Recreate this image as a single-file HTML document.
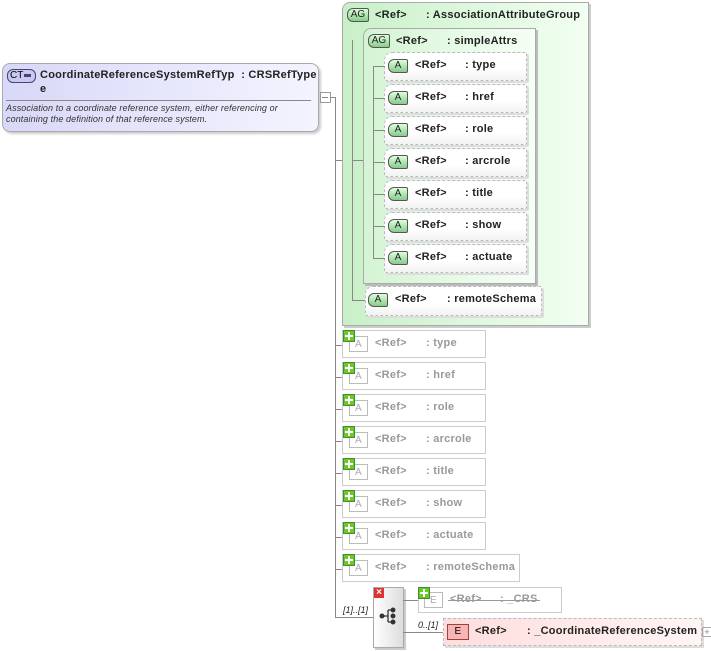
<!DOCTYPE html>
<html><head><meta charset="utf-8"><style>
body{margin:0;width:711px;height:651px;background:#fff;position:relative;overflow:hidden;font-family:"Liberation Sans",sans-serif;font-size:11px;letter-spacing:0.25px}
.a{position:absolute}
.b{font-weight:bold;color:#222;margin-top:1px}
.g{color:#999;font-weight:bold;margin-top:1px}
.ln{position:absolute;background:#888}
.badge{position:absolute;height:12px;border:1px solid #555;border-radius:6px 2px 2px 6px;background:linear-gradient(#dfd,#8c8);font-size:10px;text-align:center;line-height:12px;color:#222;letter-spacing:0}
.att{position:absolute;border:1px dashed #bbb;border-radius:8px 2px 2px 2px;background:linear-gradient(#fff,#fff 60%,#f2f2f2);box-shadow:2px 2px 0 #ddd}
.gi{position:absolute;border:1px solid #ccc;background:#fff;width:142px;height:26px}
.ga{position:absolute;width:17px;height:14px;border:1px solid #bbb;color:#aaa;font-size:10px;text-align:center;line-height:15px;background:#fff}
.plus{position:absolute;width:10px;height:10px;background:#6c2;border:1px solid #483}
.plus:before{content:"";position:absolute;left:4px;top:1px;width:2px;height:8px;background:#fff}
.plus:after{content:"";position:absolute;left:1px;top:4px;width:8px;height:2px;background:#fff}
</style></head><body>
<div class="a" style="left:2px;top:63px;width:315px;height:67px;border:1px solid #aaa;border-radius:8px;background:linear-gradient(90deg,#d8d8f8,#f4f4ff);box-shadow:2px 2px 2px #ccc"></div>
<div class="a" style="left:7px;top:69px;width:25px;height:12px;border:1px solid #447;border-radius:6px;background:#c8c8f0;font-size:10px;line-height:12px;padding-left:2px;letter-spacing:0">CT<span style="display:inline-block;width:7px;height:3px;background:#447;vertical-align:middle;margin-left:1px"></span></div>
<div class="a b" style="left:40px;top:68px;">CoordinateReferenceSystemRefTyp&nbsp; : CRSRefType</div>
<div class="a b" style="left:40px;top:82px;">e</div>
<div class="a" style="left:6px;top:100px;width:305px;height:1px;background:#888"></div>
<div class="a" style="left:6px;top:103px;font-size:9px;font-style:italic;color:#333;line-height:11px;letter-spacing:0.1px">Association to a coordinate reference system, either referencing or<br>containing the definition of that reference system.</div>
<div class="a" style="left:320px;top:92px;width:9px;height:9px;border:1px solid #999;background:#fff"></div>
<div class="ln" style="left:322px;top:97px;width:6px;height:1px"></div>
<div class="ln" style="left:330px;top:97px;width:6px;height:1px"></div>
<div class="ln" style="left:335px;top:97px;width:1px;height:521px"></div>
<div class="ln" style="left:335px;top:160px;width:8px;height:1px"></div>
<div class="a" style="left:342px;top:2px;width:245px;height:322px;border:1px solid #aaa;background:linear-gradient(90deg,#c8f0c8,#f2fff2);box-shadow:2px 2px 0 #ccc;border-radius:8px 0 0 0"></div>
<div class="badge" style="left:347px;top:8px;width:20px">AG</div>
<div class="a b" style="left:375px;top:8px">&lt;Ref&gt;</div>
<div class="a b" style="left:426px;top:8px">: AssociationAttributeGroup</div>
<div class="ln" style="left:352px;top:40px;width:1px;height:260px"></div>
<div class="ln" style="left:352px;top:160px;width:11px;height:1px"></div>
<div class="ln" style="left:352px;top:300px;width:13px;height:1px"></div>
<div class="a" style="left:363px;top:28px;width:171px;height:254px;border:1px solid #aaa;background:linear-gradient(90deg,#d4f4d4,#f6fff6);box-shadow:2px 2px 0 #bbb;border-radius:8px 0 0 0"></div>
<div class="badge" style="left:368px;top:34px;width:20px">AG</div>
<div class="a b" style="left:396px;top:34px">&lt;Ref&gt;</div>
<div class="a b" style="left:447px;top:34px">: simpleAttrs</div>
<div class="ln" style="left:373px;top:66px;width:1px;height:193px"></div>
<div class="att" style="left:384px;top:52px;width:141px;height:27px"></div><div class="badge" style="left:388px;top:59px;width:18px">A</div><div class="a b" style="left:415px;top:58px">&lt;Ref&gt;</div><div class="a b" style="left:465px;top:58px">: type</div><div class="ln" style="left:373px;top:66px;width:12px;height:1px"></div>
<div class="att" style="left:384px;top:84px;width:141px;height:27px"></div><div class="badge" style="left:388px;top:91px;width:18px">A</div><div class="a b" style="left:415px;top:90px">&lt;Ref&gt;</div><div class="a b" style="left:465px;top:90px">: href</div><div class="ln" style="left:373px;top:98px;width:12px;height:1px"></div>
<div class="att" style="left:384px;top:116px;width:141px;height:27px"></div><div class="badge" style="left:388px;top:123px;width:18px">A</div><div class="a b" style="left:415px;top:122px">&lt;Ref&gt;</div><div class="a b" style="left:465px;top:122px">: role</div><div class="ln" style="left:373px;top:130px;width:12px;height:1px"></div>
<div class="att" style="left:384px;top:148px;width:141px;height:27px"></div><div class="badge" style="left:388px;top:155px;width:18px">A</div><div class="a b" style="left:415px;top:154px">&lt;Ref&gt;</div><div class="a b" style="left:465px;top:154px">: arcrole</div><div class="ln" style="left:373px;top:162px;width:12px;height:1px"></div>
<div class="att" style="left:384px;top:180px;width:141px;height:27px"></div><div class="badge" style="left:388px;top:187px;width:18px">A</div><div class="a b" style="left:415px;top:186px">&lt;Ref&gt;</div><div class="a b" style="left:465px;top:186px">: title</div><div class="ln" style="left:373px;top:194px;width:12px;height:1px"></div>
<div class="att" style="left:384px;top:212px;width:141px;height:27px"></div><div class="badge" style="left:388px;top:219px;width:18px">A</div><div class="a b" style="left:415px;top:218px">&lt;Ref&gt;</div><div class="a b" style="left:465px;top:218px">: show</div><div class="ln" style="left:373px;top:226px;width:12px;height:1px"></div>
<div class="att" style="left:384px;top:244px;width:141px;height:27px"></div><div class="badge" style="left:388px;top:251px;width:18px">A</div><div class="a b" style="left:415px;top:250px">&lt;Ref&gt;</div><div class="a b" style="left:465px;top:250px">: actuate</div><div class="ln" style="left:373px;top:258px;width:12px;height:1px"></div>
<div class="att" style="left:365px;top:286px;width:175px;height:28px"></div><div class="badge" style="left:368px;top:293px;width:18px">A</div><div class="a b" style="left:395px;top:292px">&lt;Ref&gt;</div><div class="a b" style="left:447px;top:292px">: remoteSchema</div>
<div class="gi" style="left:342px;top:330px"></div><div class="ga" style="left:349px;top:336px">A</div><div class="plus" style="left:343px;top:330px"></div><div class="a g" style="left:375px;top:336px">&lt;Ref&gt;</div><div class="a g" style="left:426px;top:336px">: type</div><div class="ln" style="left:335px;top:345px;width:7px;height:1px"></div>
<div class="gi" style="left:342px;top:362px"></div><div class="ga" style="left:349px;top:368px">A</div><div class="plus" style="left:343px;top:362px"></div><div class="a g" style="left:375px;top:368px">&lt;Ref&gt;</div><div class="a g" style="left:426px;top:368px">: href</div><div class="ln" style="left:335px;top:377px;width:7px;height:1px"></div>
<div class="gi" style="left:342px;top:394px"></div><div class="ga" style="left:349px;top:400px">A</div><div class="plus" style="left:343px;top:394px"></div><div class="a g" style="left:375px;top:400px">&lt;Ref&gt;</div><div class="a g" style="left:426px;top:400px">: role</div><div class="ln" style="left:335px;top:409px;width:7px;height:1px"></div>
<div class="gi" style="left:342px;top:426px"></div><div class="ga" style="left:349px;top:432px">A</div><div class="plus" style="left:343px;top:426px"></div><div class="a g" style="left:375px;top:432px">&lt;Ref&gt;</div><div class="a g" style="left:426px;top:432px">: arcrole</div><div class="ln" style="left:335px;top:441px;width:7px;height:1px"></div>
<div class="gi" style="left:342px;top:458px"></div><div class="ga" style="left:349px;top:464px">A</div><div class="plus" style="left:343px;top:458px"></div><div class="a g" style="left:375px;top:464px">&lt;Ref&gt;</div><div class="a g" style="left:426px;top:464px">: title</div><div class="ln" style="left:335px;top:473px;width:7px;height:1px"></div>
<div class="gi" style="left:342px;top:490px"></div><div class="ga" style="left:349px;top:496px">A</div><div class="plus" style="left:343px;top:490px"></div><div class="a g" style="left:375px;top:496px">&lt;Ref&gt;</div><div class="a g" style="left:426px;top:496px">: show</div><div class="ln" style="left:335px;top:505px;width:7px;height:1px"></div>
<div class="gi" style="left:342px;top:522px"></div><div class="ga" style="left:349px;top:528px">A</div><div class="plus" style="left:343px;top:522px"></div><div class="a g" style="left:375px;top:528px">&lt;Ref&gt;</div><div class="a g" style="left:426px;top:528px">: actuate</div><div class="ln" style="left:335px;top:537px;width:7px;height:1px"></div>
<div class="gi" style="left:342px;top:554px;width:176px"></div><div class="ga" style="left:349px;top:560px">A</div><div class="plus" style="left:343px;top:554px"></div><div class="a g" style="left:375px;top:560px">&lt;Ref&gt;</div><div class="a g" style="left:426px;top:560px">: remoteSchema</div><div class="ln" style="left:335px;top:569px;width:7px;height:1px"></div>
<div class="ln" style="left:335px;top:617px;width:38px;height:1px"></div>
<div class="a" style="left:343px;top:605px;font-size:9px;font-style:italic;color:#222;letter-spacing:0">[1]..[1]</div>
<div class="a" style="left:373px;top:587px;width:29px;height:59px;border:1px solid #aaa;background:linear-gradient(90deg,#fff,#ddd);box-shadow:2px 2px 0 #ccc"></div>
<div class="a" style="left:374px;top:588px;width:10px;height:10px;background:#d33;color:#fff;font-size:10px;line-height:10px;text-align:center;font-weight:bold;letter-spacing:0">×</div>
<svg class="a" style="left:379px;top:607px" width="18" height="18"><g fill="#333" stroke="#333"><circle cx="3" cy="9" r="2"/><circle cx="14" cy="3" r="2"/><circle cx="14" cy="9" r="2"/><circle cx="14" cy="15" r="2"/><path d="M3 9H9M9 3V15M9 3H14M9 15H14" fill="none" stroke-width="1.3"/></g></svg>
<div class="ln" style="left:403px;top:600px;width:15px;height:1px"></div>
<div class="ln" style="left:403px;top:632px;width:40px;height:1px"></div>
<div class="gi" style="left:418px;top:587px;width:142px;height:24px"></div><div class="ga" style="left:424px;top:592px">E</div><div class="plus" style="left:418px;top:587px"></div><div class="a g" style="left:450px;top:592px">&lt;Ref&gt;</div><div class="a g" style="left:500px;top:592px">: _CRS</div>
<div class="a" style="left:448px;top:600px;width:92px;height:1px;background:#999"></div>
<div class="a" style="left:418px;top:620px;font-size:9px;font-style:italic;color:#222;letter-spacing:0">0..[1]</div>
<div class="a" style="left:443px;top:618px;width:257px;height:26px;border:1px dashed #bbb;background:linear-gradient(90deg,#fdd,#fff5f5);box-shadow:2px 2px 0 #ddd"></div>
<div class="a" style="left:447px;top:624px;width:20px;height:14px;border:1px solid #944;background:#f9b4b4;font-size:10px;line-height:14px;text-align:center">E</div>
<div class="a b" style="left:475px;top:624px">&lt;Ref&gt;</div>
<div class="a b" style="left:527px;top:624px">: _CoordinateReferenceSystem</div>
<div class="a" style="left:702px;top:627px;width:8px;height:8px;border:1px solid #aaa;font-size:9px;line-height:8px;text-align:center;color:#888;letter-spacing:0">+</div>
</body></html>
